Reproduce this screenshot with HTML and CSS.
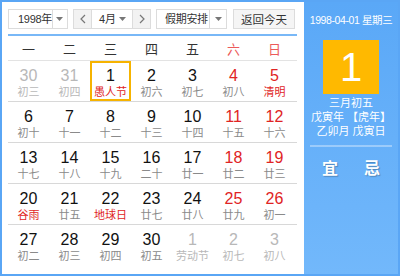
FILE: index.html
```html
<!DOCTYPE html>
<html lang="zh">
<head>
<meta charset="utf-8">
<link rel="stylesheet" href="styles.css">
</head>
<body>
<div class="cal">
  <div class="left">
    <div class="controls">
      <div class="sel year">
        <span class="sel-text">1998年</span>
        <span class="sel-arrow"><svg width="7" height="4" viewBox="0 0 7 4"><path d="M0 0h7L3.5 4z" fill="#777"/></svg></span>
      </div>
      <div class="month">
        <span class="nav"><svg width="6" height="10" viewBox="0 0 6 10"><path d="M5 1L1 5l4 4" fill="none" stroke="#777" stroke-width="1.2"/></svg></span>
        <span class="month-mid"><span class="sel-text">4月</span><svg width="7" height="4" viewBox="0 0 7 4"><path d="M0 0h7L3.5 4z" fill="#777"/></svg></span>
        <span class="nav"><svg width="6" height="10" viewBox="0 0 6 10"><path d="M1 1l4 4-4 4" fill="none" stroke="#777" stroke-width="1.2"/></svg></span>
      </div>
      <div class="sel holiday">
        <span class="sel-text">假期安排</span>
        <span class="sel-arrow"><svg width="7" height="4" viewBox="0 0 7 4"><path d="M0 0h7L3.5 4z" fill="#777"/></svg></span>
      </div>
      <div class="today">返回今天</div>
    </div>
    <div class="weekhead">
      <span>一</span><span>二</span><span>三</span><span>四</span><span>五</span><span class="we">六</span><span class="we">日</span>
    </div>
    <div class="grid">
      <div class="row">
        <div class="cell other"><b>30</b><i>初三</i></div>
        <div class="cell other"><b>31</b><i>初四</i></div>
        <div class="cell cur"><b>1</b><i class="fest">愚人节</i></div>
        <div class="cell"><b>2</b><i>初六</i></div>
        <div class="cell"><b>3</b><i>初七</i></div>
        <div class="cell we"><b>4</b><i>初八</i></div>
        <div class="cell we"><b>5</b><i class="fest">清明</i></div>
      </div>
      <div class="row">
        <div class="cell"><b>6</b><i>初十</i></div>
        <div class="cell"><b>7</b><i>十一</i></div>
        <div class="cell"><b>8</b><i>十二</i></div>
        <div class="cell"><b>9</b><i>十三</i></div>
        <div class="cell"><b>10</b><i>十四</i></div>
        <div class="cell we"><b>11</b><i>十五</i></div>
        <div class="cell we"><b>12</b><i>十六</i></div>
      </div>
      <div class="row">
        <div class="cell"><b>13</b><i>十七</i></div>
        <div class="cell"><b>14</b><i>十八</i></div>
        <div class="cell"><b>15</b><i>十九</i></div>
        <div class="cell"><b>16</b><i>二十</i></div>
        <div class="cell"><b>17</b><i>廿一</i></div>
        <div class="cell we"><b>18</b><i>廿二</i></div>
        <div class="cell we"><b>19</b><i>廿三</i></div>
      </div>
      <div class="row">
        <div class="cell"><b>20</b><i class="fest">谷雨</i></div>
        <div class="cell"><b>21</b><i>廿五</i></div>
        <div class="cell"><b>22</b><i class="fest">地球日</i></div>
        <div class="cell"><b>23</b><i>廿七</i></div>
        <div class="cell"><b>24</b><i>廿八</i></div>
        <div class="cell we"><b>25</b><i>廿九</i></div>
        <div class="cell we"><b>26</b><i>初一</i></div>
      </div>
      <div class="row last">
        <div class="cell"><b>27</b><i>初二</i></div>
        <div class="cell"><b>28</b><i>初三</i></div>
        <div class="cell"><b>29</b><i>初四</i></div>
        <div class="cell"><b>30</b><i>初五</i></div>
        <div class="cell other"><b>1</b><i>劳动节</i></div>
        <div class="cell other"><b>2</b><i>初七</i></div>
        <div class="cell other"><b>3</b><i>初八</i></div>
      </div>
    </div>
  </div>
  <div class="right">
    <div class="r-date">1998-04-01 星期三</div>
    <div class="r-day">1</div>
    <div class="r-lunar">
      <div>三月初五</div>
      <div>戊寅年 【虎年】</div>
      <div>乙卯月 戊寅日</div>
    </div>
    <div class="r-sep"></div>
    <div class="r-yj"><span>宜</span><span>忌</span></div>
  </div>
</div>
</body>
</html>
```
FILE: styles.css
```css
* { box-sizing: border-box; }
html, body { margin: 0; padding: 0; background: #fff; }
body {
  font-family: "Liberation Sans", "Noto Sans CJK SC", sans-serif;
  color: #333;
}
.cal {
  width: 400px;
  height: 276px;
  border: 2px solid #5aa6f5;
  display: flex;
}
.left {
  width: 301px;
  padding: 7px 6px 0 6px;
  background: #fff;
}
.controls {
  display: flex;
  height: 20px;
  font-size: 11px;
  white-space: nowrap;
}
.sel, .month, .today {
  border: 1px solid #dcdcdc;
  height: 20px;
  display: flex;
  align-items: center;
}
.sel-text { line-height: 18px; color: #333; }
.sel-arrow {
  border-left: 1px solid #dcdcdc;
  height: 100%;
  display: flex;
  align-items: center;
  justify-content: center;
}
.year { width: 60px; }
.year .sel-text { flex: 1; padding-left: 9px; letter-spacing: -0.3px; }
.year .sel-arrow { width: 17px; }
.month { width: 78px; margin-left: 5px; }
.nav {
  width: 18px;
  height: 100%;
  background: #f2f2f2;
  display: flex;
  align-items: center;
  justify-content: center;
}
.nav:first-child { border-right: 1px solid #dcdcdc; }
.nav:last-child { border-left: 1px solid #dcdcdc; }
.month-mid {
  flex: 1;
  display: flex;
  align-items: center;
  justify-content: space-between;
  padding: 0 6px 0 7px;
}
.holiday { width: 71px; margin-left: 5px; }
.holiday .sel-text { flex: 1; padding-left: 8px; letter-spacing: -0.3px; }
.holiday .sel-arrow { width: 17px; }
.today {
  width: 62px;
  margin-left: 6px;
  background: #f5f5f5;
  justify-content: center;
  color: #333;
  font-size: 11.5px;
}
.weekhead {
  margin-top: 5px;
  border-top: 2px solid #79b8f7;
  border-bottom: 1px solid #e3e3e3;
  height: 27px;
  display: grid;
  grid-template-columns: repeat(7, 41px);
  align-items: center;
  font-size: 13px;
}
.weekhead span { text-align: center; color: #333; }
.weekhead .we { color: #ec5a5a; }
.row {
  display: grid;
  grid-template-columns: repeat(7, 41px);
  height: 41px;
  border-bottom: 1px solid #d8d8d8;
}
.row.last { border-bottom: none; }
.cell {
  display: flex;
  flex-direction: column;
  align-items: center;
  padding-top: 6px;
}
.cell b {
  font-weight: normal;
  font-size: 16px;
  line-height: 18px;
  color: #111;
}
.cell i {
  font-style: normal;
  font-size: 11px;
  line-height: 14px;
  color: #8a8a8a;
  white-space: nowrap;
}
.cell.we b { color: #e02424; }
.cell i.fest { color: #e02424; }
.cell.other b, .cell.other i { color: #b8b8b8; }
.cell.cur { box-shadow: inset 0 0 0 2px #f6b300; }
.right {
  flex: 1;
  background: linear-gradient(#5aa8f7, #72b8fb);
  margin-left: 1px;
  color: #fff;
  display: flex;
  flex-direction: column;
  align-items: center;
  padding-top: 11px;
  white-space: nowrap;
}
.r-date { font-size: 10.5px; line-height: 15px; letter-spacing: -0.4px; }
.r-day {
  margin-top: 12px;
  width: 56px;
  height: 54px;
  background: #ffb900;
  font-size: 40px;
  line-height: 54px;
  text-align: center;
  color: #fff;
}
.r-lunar {
  margin-top: 2px;
  font-size: 11px;
  line-height: 14px;
  text-align: center;
}
.r-sep {
  margin-top: 7px;
  width: 82px;
  height: 2px;
  background: rgba(255,255,255,0.35);
}
.r-yj {
  margin-top: 8px;
  display: flex;
  gap: 26px;
  font-size: 16px;
  font-weight: bold;
  text-shadow: 1px 1px 1px rgba(0,0,0,0.25);
}
```
